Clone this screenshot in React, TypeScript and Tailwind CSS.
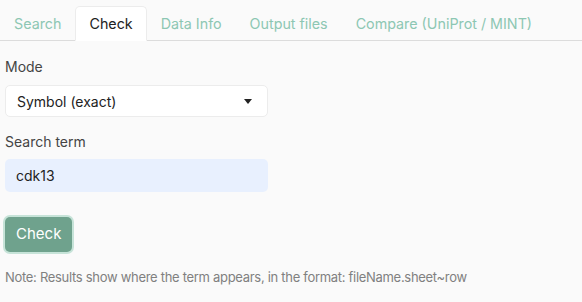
import { useState } from "react"

const tabs = ["Search", "Check", "Data Info", "Output files", "Compare (UniProt / MINT)"]

export default function App() {
  const [active, setActive] = useState("Check")
  const [term, setTerm] = useState("cdk13")

  return (
    <div className="w-[582px] h-[302px] bg-[#fafafa] font-['Inter',sans-serif] overflow-hidden">
      {/* Tabs */}
      <div className="flex pt-[6px] border-b border-[#dcdcdc]">
        {tabs.map((t) => (
          <button
            key={t}
            onClick={() => setActive(t)}
            className={`h-[35px] px-[13px] -mb-px text-[14.3px] rounded-t-[5px] border ${
              active === t
                ? "bg-white text-[#222] border-[#ececec] border-b-white"
                : "text-[#8dc7b3] border-transparent"
            }`}
          >
            {t}
          </button>
        ))}
      </div>

      <div className="px-[5px] pt-[17px]">
        <label className="block text-[14px] text-[#444] leading-[18px]">Mode</label>
        <div className="mt-[9px] w-[263px] h-[32px] bg-white border border-[#ececec] rounded-[5px] flex items-center justify-between pl-[11px] pr-[15px]">
          <span className="text-[14px] text-[#222]">Symbol (exact)</span>
          <svg width="8" height="5" viewBox="0 0 8 5">
            <path d="M0 0h8L4 5z" fill="#222" />
          </svg>
        </div>

        <label className="block mt-[16px] text-[14px] text-[#444] leading-[18px]">Search term</label>
        <input
          value={term}
          onChange={(e) => setTerm(e.target.value)}
          className="mt-[8px] block w-[263px] h-[33px] bg-[#e8f0fe] rounded-[5px] px-[11px] text-[14px] text-[#222] outline-none"
        />

        <button className="mt-[25px] h-[35px] px-[11px] bg-[#6fa28d] text-white text-[15px] rounded-[5px] ring-2 ring-[#c6e3d8]">
          Check
        </button>

        <p className="mt-[16px] text-[13px] text-[#808080] tracking-[-0.3px]">
          Note: Results show where the term appears, in the format: fileName.sheet~row
        </p>
      </div>
    </div>
  )
}
